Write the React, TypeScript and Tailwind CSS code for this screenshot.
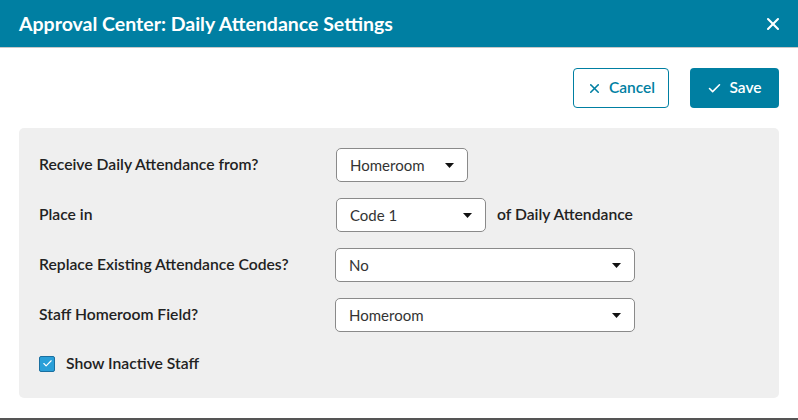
import { X, Check } from 'lucide-react';

const font = { fontFamily: '"Lato", "Noto Sans", sans-serif' };

function Select({ value, width }: { value: string; width: string }) {
    return (
        <div
            className={`${width} h-[34px] flex items-center justify-between bg-white border border-[#8a8a8a] rounded-[5px] pl-[13px] pr-[13px] text-[15px] text-[#333]`}
        >
            <span>{value}</span>
            <svg width="9" height="5" viewBox="0 0 9 5">
                <path d="M0 0h9L4.5 5z" fill="#111" />
            </svg>
        </div>
    );
}

function Row({ label, children }: { label: string; children: React.ReactNode }) {
    return (
        <div className="flex items-center">
            <div className="w-[297px] text-[15.7px] font-semibold text-[#222]">{label}</div>
            {children}
        </div>
    );
}

export default function App() {
    return (
        <div className="w-[798px] h-[420px] bg-white" style={font}>
            <div className="h-[420px] flex flex-col border-b-2 border-[#555]">
                {/* Header */}
                <div className="h-[48px] bg-[#007fa2] flex items-center justify-between pl-[19px] pr-[15px] border-b border-[#c8c8c8]">
                    <h2 className="text-[19.5px] font-bold text-white">
                        Approval Center: Daily Attendance Settings
                    </h2>
                    <X size={20} strokeWidth={2.5} className="text-white" />
                </div>

                {/* Actions */}
                <div className="flex justify-end gap-[21px] pt-[20px] pr-[19px]">
                    <button className="w-[96px] h-[40px] flex items-center justify-center gap-[7px] border border-[#007fa2] rounded-[4px] text-[#007fa2] text-[15.5px] font-semibold">
                        <X size={15} strokeWidth={2.5} />
                        Cancel
                    </button>
                    <button className="w-[89px] h-[40px] flex items-center justify-center gap-[7px] bg-[#007fa2] rounded-[4px] text-white text-[15.5px] font-semibold">
                        <Check size={15} strokeWidth={2.5} />
                        Save
                    </button>
                </div>

                {/* Panel */}
                <div className="mx-[19px] mt-[20px] h-[270px] bg-[#efefef] rounded-[5px] pl-[20px] pt-[20px] flex flex-col gap-[16px]">
                    <Row label="Receive Daily Attendance from?">
                        <Select value="Homeroom" width="w-[132px]" />
                    </Row>
                    <Row label="Place in">
                        <Select value="Code 1" width="w-[150px]" />
                        <span className="ml-[11px] text-[15.7px] font-semibold text-[#222]">of Daily Attendance</span>
                    </Row>
                    <Row label="Replace Existing Attendance Codes?">
                        <div className="-ml-px">
                            <Select value="No" width="w-[300px]" />
                        </div>
                    </Row>
                    <Row label="Staff Homeroom Field?">
                        <div className="-ml-px">
                            <Select value="Homeroom" width="w-[300px]" />
                        </div>
                    </Row>
                    <label className="flex items-center gap-[11px] mt-[4px]">
                        <span className="w-[16px] h-[16px] rounded-[2px] bg-[#2a9fd8] border border-[#1a6fa0] flex items-center justify-center">
                            <Check size={11} strokeWidth={2.5} className="text-white" />
                        </span>
                        <span className="text-[15.7px] font-semibold text-[#222]">Show Inactive Staff</span>
                    </label>
                </div>
            </div>
        </div>
    );
}
